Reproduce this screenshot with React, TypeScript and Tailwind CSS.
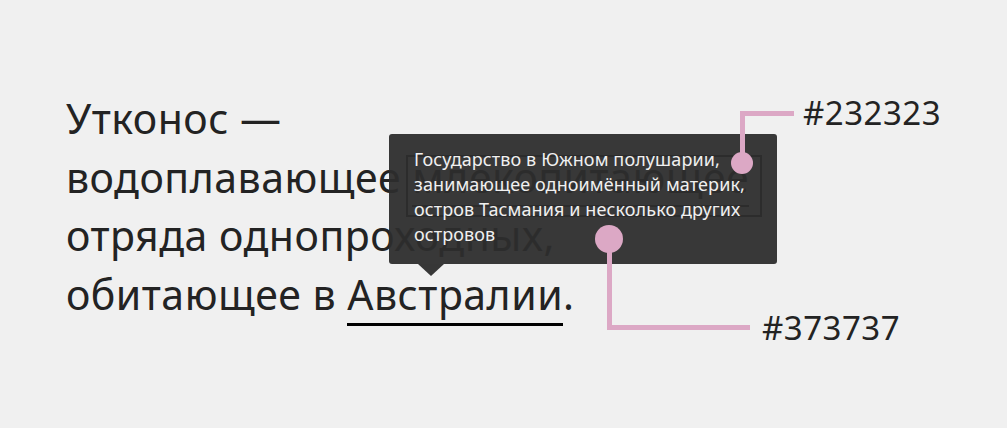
export default function App() {
  return (
    <div className="relative w-[1007px] h-[428px] overflow-hidden bg-[#f0f0f0] font-['Noto_Sans',sans-serif] text-[#232323]">
      {/* paragraph with the hovered term */}
      <p className="pl-[66px] pt-[89px] text-[41px] leading-[58.5px] tracking-[0.5px]">
        Утконос —
        <br />
        водоплавающее{' '}
        <span className="relative">
          млекопитающее
          <span className="absolute left-0 right-0 top-[56px] h-[2px] bg-[#232323]" />
          <span className="absolute -left-[6px] -right-[13px] top-[6px] h-[62px] border-2 border-[#232323]" />
        </span>
        <br />
        отряда однопроходных,
        <br />
        обитающее в{' '}
        <span className="relative">
          Австралии
          <span className="absolute left-0 right-0 top-[57px] h-[3px] bg-black" />
        </span>
        .
      </p>

      {/* tooltip */}
      <div className="absolute left-[389px] top-[134px] w-[388px] h-[130px] rounded-[3px] bg-[#2d2d2d]/95 px-[25px] pt-[13px] text-[18px] leading-[25px] tracking-[0.1px] text-[#f0f0f0]">
        Государство в Южном полушарии, занимающее одноимённый материк, остров Тасмания и несколько других островов
        <span className="absolute left-[29px] top-full border-x-[13px] border-t-[12px] border-x-transparent border-t-[#373737]" />
      </div>

      {/* callout: text colour */}
      <div className="absolute left-[740px] top-[91px] flex items-start">
        <div className="relative mt-[20px] w-[54px] h-[52px] border-l-[5px] border-t-[5px] border-[#dca8c5]">
          <span className="absolute -left-[14px] bottom-[-11px] w-[22px] h-[22px] rounded-full bg-[#dca8c5]" />
        </div>
        <span className="ml-[9px] text-[33px] leading-[44px] tracking-[0.5px]">#232323</span>
      </div>

      {/* callout: background colour */}
      <div className="absolute left-[595px] top-[225px] flex items-end">
        <div className="relative ml-[12px] mt-[14px] w-[143px] h-[91px] border-l-[5px] border-b-[5px] border-[#dca8c5]">
          <span className="absolute -left-[17px] -top-[14px] w-[28px] h-[28px] rounded-full bg-[#dca8c5]" />
        </div>
        <span className="-mb-[20px] ml-[12px] text-[33px] leading-[44px] tracking-[0.5px]">#373737</span>
      </div>
    </div>
  )
}
